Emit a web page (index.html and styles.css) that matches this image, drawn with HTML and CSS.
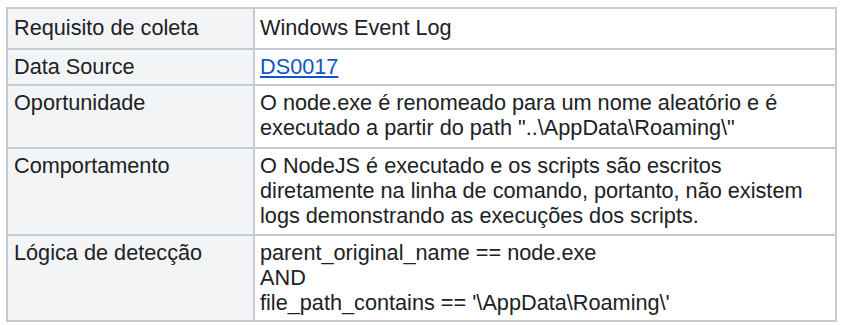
FILE: index.html
```html
<!DOCTYPE html>
<html lang="pt">
<head>
<meta charset="utf-8">
<link rel="stylesheet" href="styles.css">
</head>
<body>
<table class="info">
  <colgroup><col class="c1"><col class="c2"></colgroup>
  <tr class="first">
    <th>Requisito de coleta</th>
    <td>Windows Event Log</td>
  </tr>
  <tr>
    <th>Data Source</th>
    <td><a href="#">DS0017</a></td>
  </tr>
  <tr class="roomy">
    <th>Oportunidade</th>
    <td>O node.exe é renomeado para um nome aleatório e é<br>executado a partir do path "..\AppData\Roaming\"</td>
  </tr>
  <tr class="loose">
    <th>Comportamento</th>
    <td>O NodeJS é executado e os scripts são escritos<br>diretamente na linha de comando, portanto, não existem<br>logs demonstrando as execuções dos scripts.</td>
  </tr>
  <tr>
    <th>Lógica de detecção</th>
    <td>parent_original_name == node.exe<br>AND<br>file_path_contains == '\AppData\Roaming\'</td>
  </tr>
</table>
</body>
</html>
```
FILE: styles.css
```css
html, body {
  margin: 0;
  padding: 0;
  background: #ffffff;
}
.info {
  margin: 7px 0 0 6px;
  width: 831px;
  border-collapse: collapse;
  table-layout: fixed;
  font-family: "Liberation Sans", Arial, sans-serif;
  font-size: 21.7px;
  color: #202124;
}
.c1 { width: 247px; }
.info th, .info td {
  border: 2px solid #c6cad2;
  padding: 4px 5px 5px 6px;
  vertical-align: top;
  text-align: left;
  font-weight: normal;
  line-height: 25px;
}
.info th {
  background: #f3f4f6;
  padding-left: 6px;
}
.info td {
  background: #ffffff;
  padding-left: 5px;
}
.info tr.first th, .info tr.first td {
  padding-top: 6px;
  padding-bottom: 8px;
}
.info tr.roomy th, .info tr.roomy td {
  padding-bottom: 7px;
}
.info tr.loose th, .info tr.loose td {
  padding-bottom: 6px;
}
.info a {
  color: #1155cc;
  text-decoration: underline;
}
```
